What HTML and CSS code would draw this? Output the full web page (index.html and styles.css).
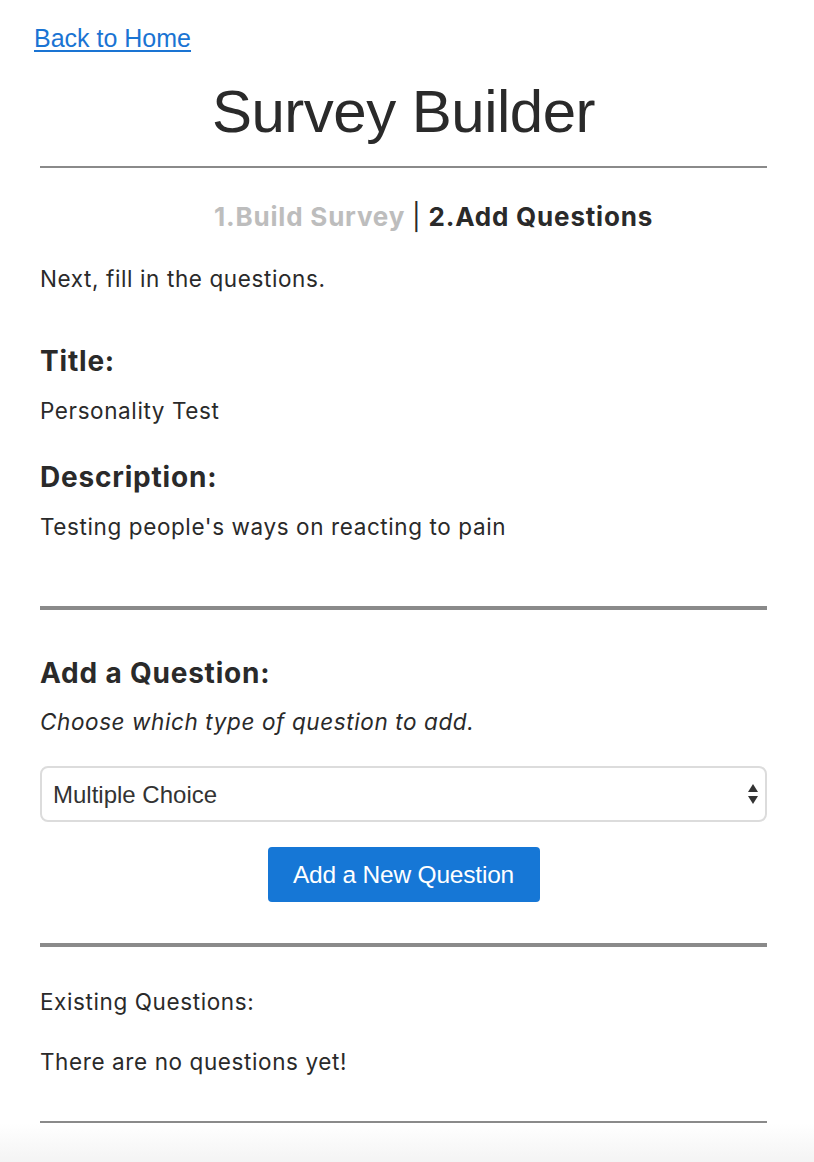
FILE: index.html
```html
<!DOCTYPE html>
<html>
<head>
<meta charset="utf-8">
<title>Survey Builder</title>
<link rel="stylesheet" href="styles.css">
</head>
<body>
<div class="page">
  <nav class="topnav"><a class="back-link" href="#">Back to Home</a></nav>
  <main class="content">
    <h1 class="title">Survey Builder</h1>
    <hr class="rule rule-thin rule-top">
    <div class="steps"><span class="step-done">1.Build Survey</span> <span class="step-sep">|</span> <span class="step-current">2.Add Questions</span></div>
    <p class="text intro">Next, fill in the questions.</p>
    <h3 class="label label-title">Title:</h3>
    <p class="text value">Personality Test</p>
    <h3 class="label label-desc">Description:</h3>
    <p class="text value">Testing people's ways on reacting to pain</p>
    <hr class="rule rule-thick rule-mid1">
    <h3 class="label label-add">Add a Question:</h3>
    <p class="text hint">Choose which type of question to add.</p>
    <div class="select-wrap">
      <select class="select">
        <option>Multiple Choice</option>
        <option>Short Answer</option>
      </select>
      <svg class="select-arrows" width="12" height="22" viewBox="0 0 12 22"><path d="M6 1 L11 9 L1 9 Z" fill="#333"/><path d="M1 13 L11 13 L6 21 Z" fill="#333"/></svg>
    </div>
    <div class="btn-row"><button class="btn">Add a New Question</button></div>
    <hr class="rule rule-thick rule-mid2">
    <p class="text existing">Existing Questions:</p>
    <p class="text none">There are no questions yet!</p>
    <hr class="rule rule-thin rule-bottom">
  </main>
  <footer class="footer"></footer>
</div>
</body>
</html>
```
FILE: styles.css
```css
html, body {
  margin: 0;
  padding: 0;
  background: #fff;
}
body {
  font-family: Inter, "Noto Sans", "Liberation Sans", sans-serif;
  color: #2a2a2a;
}
.page {
  display: flex;
  flex-direction: column;
  min-height: 1162px;
}
.topnav {
  padding: 24px 0 0 34px;
  line-height: 28px;
}
.back-link {
  font-family: "Liberation Sans", Arial, sans-serif;
  font-size: 25px;
  color: #1a74d3;
  text-decoration: underline;
  text-underline-offset: 3px;
  text-decoration-thickness: 2px;
}
.content {
  margin: 0 47px 0 40px;
}
.title {
  font-family: "Liberation Sans", Arial, sans-serif;
  font-weight: 400;
  font-size: 60px;
  line-height: 70px;
  margin: 22px 0 0;
  text-align: center;
  letter-spacing: -0.5px;
  color: #2a2a2a;
}
.rule {
  border: none;
  margin: 0;
  background: #8a8a8a;
}
.rule-thin { height: 2px; }
.rule-thick { height: 4px; }
.rule-top { margin-top: 19px; }
.rule-mid1 { margin-top: 63px; }
.rule-mid2 { margin-top: 41px; }
.rule-bottom { margin-top: 43px; }
.steps {
  margin-top: 33px;
  padding-left: 60px;
  text-align: center;
  font-size: 26px;
  font-weight: 700;
  line-height: 32px;
  letter-spacing: 0.8px;
  color: #2a2a2a;
}
.step-done { color: #bdbdbd; }
.step-sep { font-weight: 400; }
.step-current { color: #2a2a2a; }
.text {
  margin: 0;
  font-size: 22.5px;
  line-height: 32px;
  letter-spacing: 0.6px;
}
.intro { margin-top: 30px; }
.value { margin-top: 17px; }
.label {
  margin: 0;
  font-size: 28px;
  font-weight: 700;
  line-height: 34px;
  letter-spacing: 0.8px;
}
.label-title { margin-top: 49px; }
.label-desc { margin-top: 33px; }
.label-add { margin-top: 46px; }
.hint {
  margin-top: 16px;
  font-style: italic;
}
.select-wrap {
  position: relative;
  margin-top: 28px;
}
.select {
  appearance: none;
  -webkit-appearance: none;
  display: block;
  width: 100%;
  height: 56px;
  box-sizing: border-box;
  border: 2px solid #dcdcdc;
  border-radius: 8px;
  background: #fff;
  padding: 0 40px 0 11px;
  font-family: "Liberation Sans", Arial, sans-serif;
  font-size: 24px;
  color: #333;
}
.select-arrows {
  position: absolute;
  right: 8px;
  top: 17px;
  pointer-events: none;
}
.btn-row {
  display: flex;
  justify-content: center;
  margin-top: 25px;
}
.btn {
  width: 272px;
  height: 55px;
  border: none;
  border-radius: 4px;
  background: #1677d6;
  color: #fff;
  font-family: "Liberation Sans", Arial, sans-serif;
  font-size: 24.5px;
  letter-spacing: -0.2px;
}
.existing { margin-top: 39px; }
.none { margin-top: 28px; }
.footer {
  flex: 1;
  background: linear-gradient(#ffffff, #f4f4f4);
}
```
